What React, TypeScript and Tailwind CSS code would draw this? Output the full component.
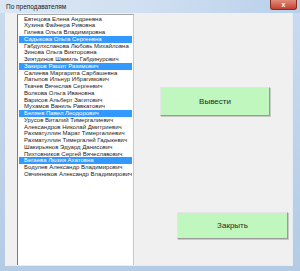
const TEACHERS: { name: string; selected?: boolean }[] = [
  { name: 'Евтецова Елена Андреевна' },
  { name: 'Хузина Файнера Ривовна' },
  { name: 'Гилева Ольга Владимировна' },
  { name: 'Садыкова Ольга Сергеевна', selected: true },
  { name: 'Габдулхсланова Любовь Михайловна' },
  { name: 'Зинова Ольга Викторовна' },
  { name: 'Зиятдинов Шамиль Габдинурович' },
  { name: 'Закиров Рашит Разимович', selected: true },
  { name: 'Салиева Маргарита Сарбашевна' },
  { name: 'Латыпов Ильнур Ибрагимович' },
  { name: 'Ткачев Вячеслав Сергеевич' },
  { name: 'Волкова Ольга Ивановна' },
  { name: 'Варисов Альберт Загитович' },
  { name: 'Мухамов Ваниль Равкатович' },
  { name: 'Беляев Павел Леодорович', selected: true },
  { name: 'Урусов Виталий Тимергалиевич' },
  { name: 'Александров Николай Дмитриевич' },
  { name: 'Рахматуллин Марат Тимергалиевич' },
  { name: 'Рахматуллин Тимергалей Гадыкевич' },
  { name: 'Шакирьянов Эдуард Данисович' },
  { name: 'Пихтовников Сергей Вячеславович' },
  { name: 'Бегаева Люзия Ахатовна', selected: true },
  { name: 'Бодулев Александр Владимирович' },
  { name: 'Овчинников Александр Владимирович' },
]

// Old WinForms-style green button
function GreenButton({ label, className }: { label: string; className: string }) {
  return (
    <button
      type="button"
      className={`flex items-center justify-center bg-[#bff7bf] border border-t-[#e4e4e4] border-l-[#e4e4e4] border-b-[#9a9a9a] border-r-[#9a9a9a] shadow-[1px_1px_0_#c8c8c8] text-[8px] text-[#1f2a1f] font-['Liberation_Sans',sans-serif] ${className}`}
    >
      {label}
    </button>
  )
}

export default function App() {
  return (
    <div className="w-[300px] h-[271px] flex flex-col bg-gradient-to-b from-[#c9dbef] to-[#b4cbe4] overflow-hidden font-['Liberation_Sans',sans-serif]">
      {/* title bar */}
      <div className="h-[13px] flex items-start justify-between bg-gradient-to-r from-[#dae6f4] via-[#cfdff1] to-[#b8d0ea]">
        <span className="pl-[6px] pt-[2px] text-[6.5px] leading-[9px] text-[#1b1b1b]">По преподавателям</span>
        <div className="mr-[3px] w-[27px] h-[10px] rounded-b-[3px] bg-gradient-to-b from-[#e08a7c] to-[#c4402f] border border-t-0 border-[#8a2a20] flex items-center justify-center text-white text-[7px] leading-none font-bold">
          x
        </div>
      </div>

      {/* client area */}
      <div className="flex-1 ml-[5px] mr-[7px] mb-[5px] bg-[#f0f0f0] border-r border-b border-[#e4ecf5] flex overflow-hidden">
        <div className="ml-[12px] mt-[1px] w-[117px] bg-white border-l border-t border-l-[#7b7b7b] border-t-[#a8a8a8] border-r border-r-[#c8c8c8] pt-[0.5px] pl-[1px] pr-[1px] overflow-hidden">
          {TEACHERS.map((t) => (
            <div
              key={t.name}
              className={`h-[6.75px] leading-[6.75px] pl-[5px] text-[6px] whitespace-nowrap overflow-hidden ${
                t.selected ? 'bg-[#3399ff] text-white' : 'text-[#222]'
              }`}
            >
              {t.name}
            </div>
          ))}
        </div>

        <div className="flex-1 flex flex-col">
          <GreenButton label="Вывести" className="ml-[26px] mt-[74px] w-[110px] h-[29px]" />
          <GreenButton label="Закрыть" className="ml-[43px] mt-[96px] w-[111px] h-[27px]" />
        </div>
      </div>
    </div>
  )
}
